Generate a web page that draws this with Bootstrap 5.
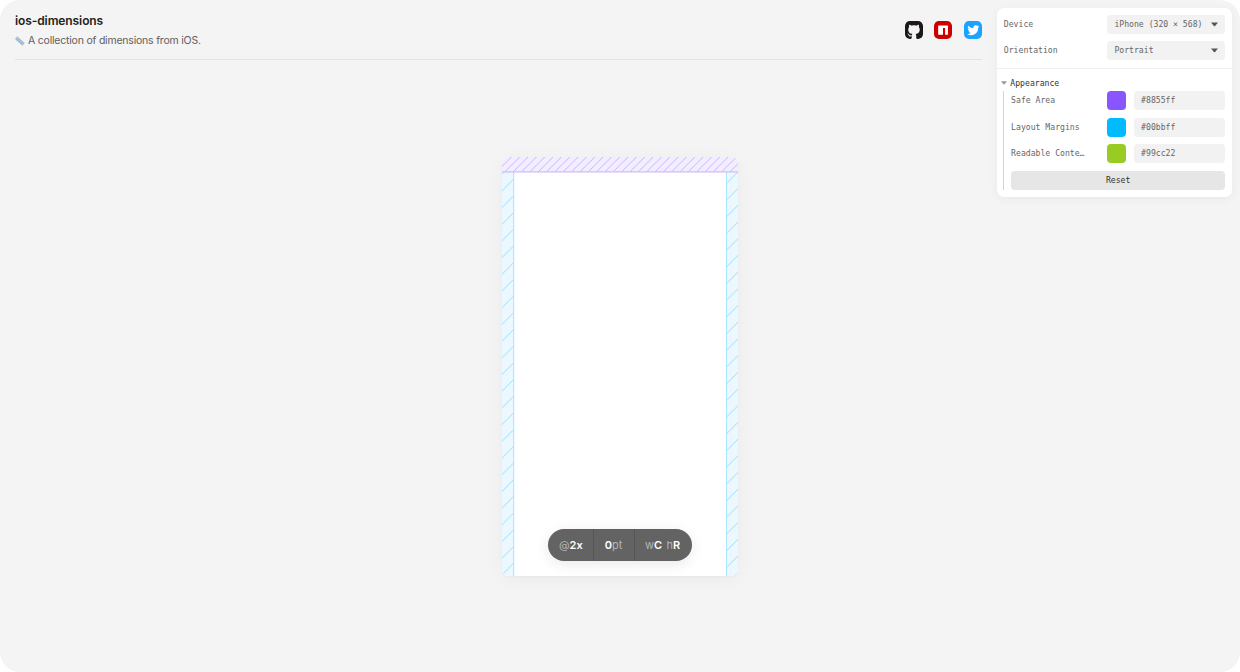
<!DOCTYPE html>
<html lang="en">
<head>
<meta charset="utf-8">
<meta name="viewport" content="width=device-width, initial-scale=1">
<title>ios-dimensions</title>
<link href="https://cdn.jsdelivr.net/npm/bootstrap@5.3.0/dist/css/bootstrap.min.css" rel="stylesheet">
<style>
body{background:#fff;font-family:Inter,sans-serif;color:#222}
.stage{height:672px;background:#f4f4f4;border-radius:20px}
.main-area{width:996px;padding:0 15px}
.site-head{height:60px;border-bottom:1px solid #e4e4e4;width:966.5px}
.site-head h1{font-size:12px;line-height:16px;font-weight:600;letter-spacing:-.1px;margin:13px 0 0;color:#222}
.tagline{font-size:10.5px;line-height:16px;letter-spacing:-.21px;margin-top:4px;color:#606060}
.tagline svg{width:10px;height:10px;margin:0 3px 0 0}
.social{gap:11.5px}
.social svg{width:18px;height:18px;display:block}
.device{left:502px;top:157px;width:236px;height:419px;background:#fff;border-radius:6px;box-shadow:0 1px 2px rgba(0,0,0,.03),0 4px 20px rgba(0,0,0,.04)}
.device>svg{display:block;border-radius:6px}
.pill{left:45.6px;top:372px;height:32px;width:144.6px;border-radius:16px;background:#636363;color:#fff;font-size:11px;font-weight:600;box-shadow:0 3px 14px rgba(0,0,0,.09)}
.pill span{height:32px;line-height:33px;text-align:center}
.pill span+span{border-left:1px solid #555}
.pill i{font-style:normal;font-weight:400;color:#b5b5b5}
.pill b{font-weight:600;margin-right:4.5px}
.scale-cell{width:45.4px;padding-left:1px}
.inset-cell{width:41px;padding-right:1px}
.class-cell{width:58.2px;padding-right:2px}
.panel{width:235.7px;height:189px;margin:8px 7.8px 0 auto;background:#fff;border-radius:7px;box-shadow:0 2px 10px rgba(0,0,0,.05);font-family:"DejaVu Sans Mono",monospace;font-size:8.15px;color:#666}
.prow{height:19px;margin-bottom:7.6px}
.plabel{width:103.2px;line-height:19px}
.field{height:19.3px;line-height:19.3px;background:#f2f2f2;border-radius:4px;padding:0 7.4px}
.field svg{width:7px;height:5px}
.top-group{padding:6.5px 7px 0 7.3px;height:60.5px;border-bottom:1px solid #efefef}
.group-title{height:16px;line-height:16px;margin:6.5px 0 0 4.8px;color:#333}
.group-title svg{width:6px;height:4px;margin-right:3px}
.group-body{margin:0 7px 0 6.6px;border-left:1px solid #d4d4d4;padding-left:7px;height:98.5px}
.group-body .plabel{width:95.8px;line-height:18px}
.swatch{width:19.3px;height:19.3px;border-radius:4px;margin-right:7.5px}
.safe{background:#85f}.margins{background:#0bf}.readable{background:#9c2}
.reset{height:19px;line-height:19px;background:#e6e6e6;border-radius:4px;border:0;padding:0;color:#333;font-size:8.15px;font-family:inherit}
</style>
</head>
<body>
<div class="stage position-relative d-flex">
  <main class="main-area">
    <header class="site-head d-flex justify-content-between">
      <div>
        <h1>ios-dimensions</h1>
        <div class="tagline d-flex align-items-center"><svg viewBox="0 0 10 10"><path d="M2.2.3 9.8 7 7.700 9.600.1 2.800Z" fill="#a3c3dd"/><path d="m2.200 4.700 1-1.100m.8 2.700 1-1.100m.8 2.700 1-1.100M.3 2.800l7.400 6.600" stroke="#7d9fbd" stroke-width=".5"/></svg><span>A collection of dimensions from iOS.</span></div>
      </div>
      <nav class="social d-flex align-items-center">
        <svg viewBox="0 0 512 512" role="img" aria-label="GitHub"><rect width="512" height="512" rx="145" fill="#1b1817"/><path fill="#f4f4f4" d="M335 512H165s0-13 12-13c13 0 16-6 16-12l-1-50c-71 16-86-28-86-28-12-30-28-37-28-37-24-16 1-16 1-16 26 2 40 26 40 26 22 39 59 28 74 22 2-17 9-28 16-35-57-6-116-28-116-126 0-28 10-51 26-69-3-6-11-32 3-67 0 0 21-7 70 26 42-12 86-12 128 0 49-33 70-26 70-26 14 35 6 61 3 67 16 18 26 41 26 69 0 98-60 120-117 126 10 8 18 24 18 48l-1 70c0 6 3 12 16 12z"/></svg>
        <svg viewBox="0 0 512 512" role="img" aria-label="npm"><rect width="512" height="512" rx="145" fill="#c00"/><path fill="#fff" d="M119 390h137V196h60v194h80V128H119z"/></svg>
        <svg viewBox="0 0 512 512" role="img" aria-label="Twitter"><rect width="512" height="512" rx="145" fill="#1aa3ff"/><path fill="#fff" d="M437 152a72 72 0 0 1-40 12a72 72 0 0 0 32-40a72 72 0 0 1-45 17a72 72 0 0 0-122 65a200 200 0 0 1-145-74a72 72 0 0 0 22 94a72 72 0 0 1-32-7a72 72 0 0 0 56 69a72 72 0 0 1-32 1a72 72 0 0 0 67 50a200 200 0 0 1-105 29a200 200 0 0 0 309-179a200 200 0 0 0 35-37"/></svg>
      </nav>
    </header>
  </main>
  <section class="device position-absolute">
    <svg width="236" height="419" viewBox="0 0 236 419">
      <defs>
        <pattern id="hatchSafe" width="8.34" height="8.34" patternUnits="userSpaceOnUse" patternTransform="translate(1 0)"><path d="M-1 1 1-1M0 8.340 8.340 0M7.340 9.340l2-2" stroke="#bb9cff" stroke-width=".75"/></pattern>
        <pattern id="hatchMargin" width="16.7" height="16.7" patternUnits="userSpaceOnUse" patternTransform="translate(.4 0)"><path d="M-1 1 1-1M0 16.700 16.700 0M15.700 17.700l2-2" stroke="#80d8ff" stroke-width=".8"/></pattern>
      </defs>
      <path fill="#ebf8ff" d="M0 15h12v404H0zM224 15h12v404h-12z"/>
      <path fill="url(#hatchMargin)" d="M0 15h12v404H0zM224 15h12v404h-12z"/>
      <path fill="#a8e4ff" d="M11.200 15h1v404h-1zM224 15h.9v404h-.9z"/>
      <path fill="#f3eeff" d="M0 0h236v15H0z"/>
      <path fill="url(#hatchSafe)" d="M0 0h236v15H0z"/>
      <path fill="#d0bbff" d="M0 14.300h236v1.100H0z"/>
    </svg>
    <div class="pill position-absolute d-flex">
      <span class="scale-cell"><i>@</i>2x</span><span class="inset-cell">0<i>pt</i></span><span class="class-cell"><i>w</i><b>C</b><i>h</i>R</span>
    </div>
  </section>
  <aside class="panel">
    <div class="top-group">
      <div class="prow d-flex"><span class="plabel">Device</span><div class="field flex-fill d-flex align-items-center justify-content-between"><span>iPhone (320 × 568)</span><svg viewBox="0 0 6 4"><path d="M0 .3h6L3.500 3.300q-.5.500-1 0z" fill="#555"/></svg></div></div>
      <div class="prow d-flex"><span class="plabel">Orientation</span><div class="field flex-fill d-flex align-items-center justify-content-between"><span>Portrait</span><svg viewBox="0 0 6 4"><path d="M0 .3h6L3.500 3.300q-.5.500-1 0z" fill="#555"/></svg></div></div>
    </div>
    <div class="group-title d-flex align-items-center"><svg viewBox="0 0 6 4"><path d="M0 .3h6L3.500 3.300q-.5.500-1 0z" fill="#999"/></svg><span>Appearance</span></div>
    <div class="group-body">
      <div class="prow d-flex"><span class="plabel">Safe Area</span><div class="swatch safe"></div><div class="field flex-fill">#8855ff</div></div>
      <div class="prow d-flex"><span class="plabel">Layout Margins</span><div class="swatch margins"></div><div class="field flex-fill">#00bbff</div></div>
      <div class="prow d-flex"><span class="plabel">Readable Conte…</span><div class="swatch readable"></div><div class="field flex-fill">#99cc22</div></div>
      <button class="reset w-100 d-block">Reset</button>
    </div>
  </aside>
</div>
<script src="https://cdn.jsdelivr.net/npm/bootstrap@5.3.0/dist/js/bootstrap.bundle.min.js"></script>
</body>
</html>
